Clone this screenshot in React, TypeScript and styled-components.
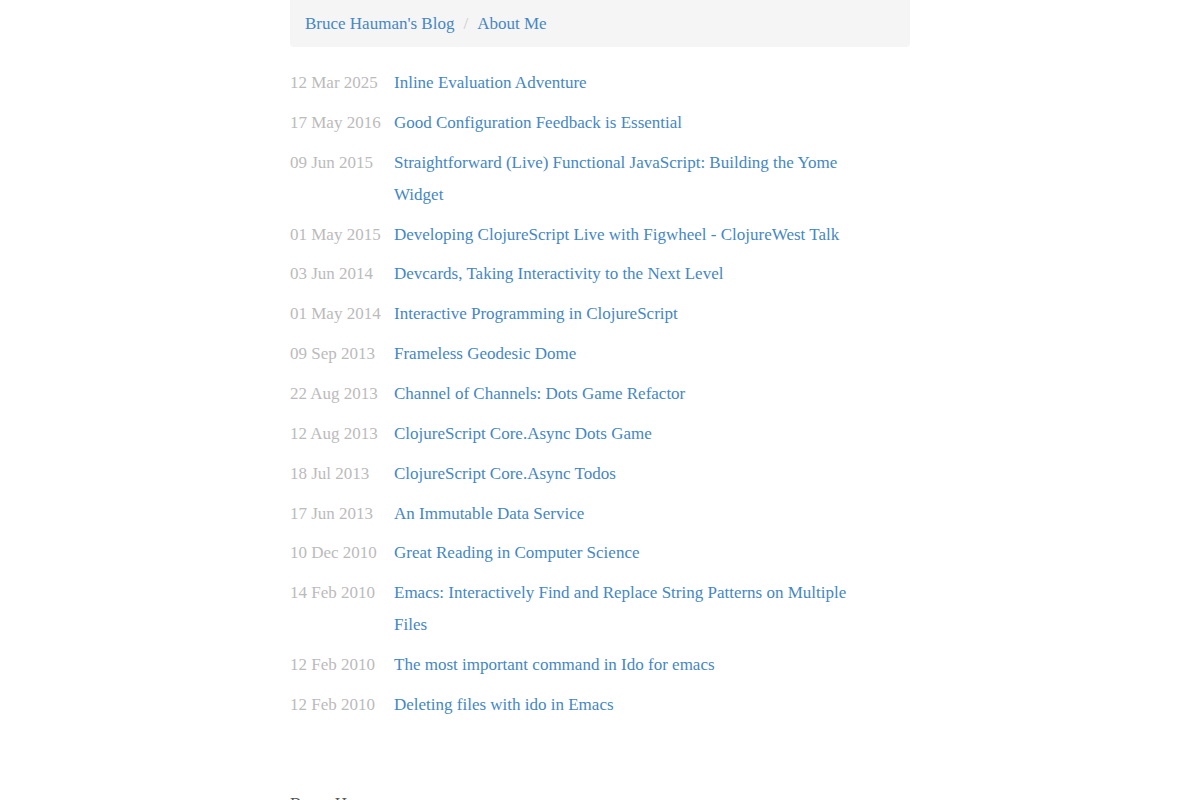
import React from 'react';
import styled, { createGlobalStyle } from 'styled-components';

interface IPost {
  date: string;
  title: string;
}

const posts: IPost[] = [
  { date: '12 Mar 2025', title: 'Inline Evaluation Adventure' },
  { date: '17 May 2016', title: 'Good Configuration Feedback is Essential' },
  {
    date: '09 Jun 2015',
    title: 'Straightforward (Live) Functional JavaScript: Building the Yome Widget',
  },
  {
    date: '01 May 2015',
    title: 'Developing ClojureScript Live with Figwheel - ClojureWest Talk',
  },
  { date: '03 Jun 2014', title: 'Devcards, Taking Interactivity to the Next Level' },
  { date: '01 May 2014', title: 'Interactive Programming in ClojureScript' },
  { date: '09 Sep 2013', title: 'Frameless Geodesic Dome' },
  { date: '22 Aug 2013', title: 'Channel of Channels: Dots Game Refactor' },
  { date: '12 Aug 2013', title: 'ClojureScript Core.Async Dots Game' },
  { date: '18 Jul 2013', title: 'ClojureScript Core.Async Todos' },
  { date: '17 Jun 2013', title: 'An Immutable Data Service' },
  { date: '10 Dec 2010', title: 'Great Reading in Computer Science' },
  {
    date: '14 Feb 2010',
    title: 'Emacs: Interactively Find and Replace String Patterns on Multiple Files',
  },
  { date: '12 Feb 2010', title: 'The most important command in Ido for emacs' },
  { date: '12 Feb 2010', title: 'Deleting files with ido in Emacs' },
];

const GlobalStyle = createGlobalStyle`
  body {
    margin: 0;
    background: #fff;
    font-family: "Liberation Serif", "Times New Roman", serif;
    font-size: 17px;
    line-height: 32px;
    color: #333;
  }
`;

const Container = styled.div`
  width: 620px;
  margin: 0 auto;
`;

const Breadcrumb = styled.ol`
  list-style: none;
  margin: 0 0 20px;
  padding: 8px 15px;
  background: #f5f5f5;
  border-radius: 0 0 4px 4px;
  display: flex;
  line-height: 31px;
`;

const Crumb = styled.li<{ first?: boolean }>`
  &::before {
    content: ${({ first }) => (first ? "''" : "'/'")};
    padding: ${({ first }) => (first ? '0' : '0 9px 0 9px')};
    color: #ccc;
  }
`;

const Link = styled.a`
  color: #4587c4;
  text-decoration: none;
`;

const PostList = styled.ul`
  list-style: none;
  margin: 0;
  padding: 0;
  width: 580px;
  display: flex;
  flex-direction: column;
  gap: 7.86px;
`;

const PostRow = styled.li`
  display: grid;
  grid-template-columns: 104px 1fr;
`;

const PostDate = styled.span`
  color: #bbb;
  white-space: nowrap;
`;

const Footer = styled.div`
  margin-top: 67px;
  color: #555;
  padding-bottom: 40px;
`;

const App: React.FC = () => {
  return (
    <>
      <GlobalStyle />
      <Container>
        <Breadcrumb>
          <Crumb first>
            <Link href="#">Bruce Hauman's Blog</Link>
          </Crumb>
          <Crumb>
            <Link href="#">About Me</Link>
          </Crumb>
        </Breadcrumb>
        <PostList>
          {posts.map((post, index) => (
            <PostRow key={index}>
              <PostDate>{post.date}</PostDate>
              <Link href="#">{post.title}</Link>
            </PostRow>
          ))}
        </PostList>
        <Footer>Bruce Hauman</Footer>
      </Container>
    </>
  );
};

export default App;
